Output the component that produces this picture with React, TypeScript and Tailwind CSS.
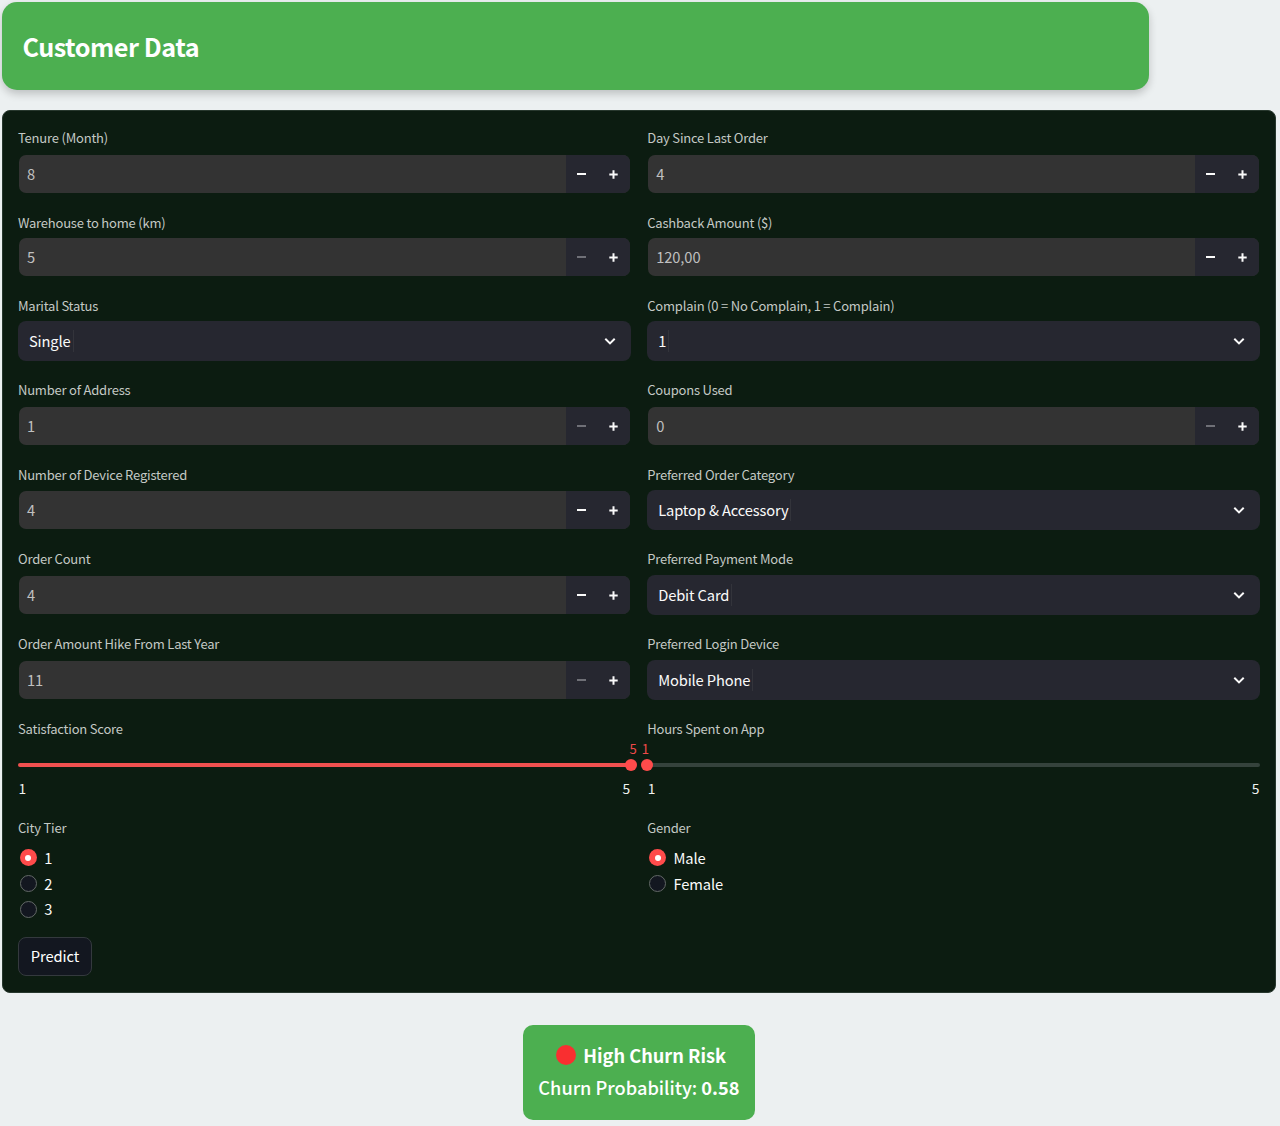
import React from "react";

type NumberProps = { label: string; value: string; minDisabled?: boolean };
type SelectProps = { label: string; value: string };

function Label({ children }: { children: React.ReactNode }) {
  return (
    <div className="h-5 whitespace-nowrap text-[13px] leading-5 tracking-[-0.2px] text-[#c4c9c5]">{children}</div>
  );
}

function Chevron() {
  return (
    <svg width="12" height="8" viewBox="0 0 12 8" fill="none" stroke="#fafafa" strokeWidth="2">
      <path d="M1.3 1.8 6 6.4l4.7-4.6" />
    </svg>
  );
}

function NumberField({ label, value, minDisabled }: NumberProps) {
  return (
    <div className="flex flex-col justify-between">
      <Label>{label}</Label>
      <div className="mx-px my-px flex h-[38px] overflow-hidden rounded-[7px] bg-[#333333]">
        <div className="flex-1 pl-2 text-[14.7px] leading-[37px] tracking-[-0.1px] text-[#c0c0c0]">{value}</div>
        <div className="flex w-16 bg-[#262730]">
          <button type="button" className="flex w-8 items-center justify-center">
            <span className={minDisabled ? "h-[2px] w-[9px] bg-[#6f7077]" : "h-[2px] w-[9px] bg-[#fafafa]"} />
          </button>
          <button type="button" className="flex w-8 items-center justify-center">
            <svg width="9" height="9" viewBox="0 0 9 9" stroke="#fafafa" strokeWidth="2">
              <path d="M4.5 0.3v8.4M0.3 4.5h8.4" />
            </svg>
          </button>
        </div>
      </div>
    </div>
  );
}

function SelectField({ label, value }: SelectProps) {
  return (
    <div className="flex flex-col justify-between">
      <Label>{label}</Label>
      <div className="flex h-10 items-center rounded-lg bg-[#262730] pl-[11px] pr-[15px]">
        <span className="text-[14.7px] leading-10 tracking-[-0.14px] text-[#fafafa]">{value}</span>
        <span className="ml-[2px] h-[22px] w-px bg-[#33343b]" />
        <span className="ml-auto">
          <Chevron />
        </span>
      </div>
    </div>
  );
}

function Slider({ label, full }: { label: string; full?: boolean }) {
  return (
    <div>
      <Label>{label}</Label>
      <div className="relative mt-[24px] h-[5px]">
        <div className={full ? "h-1 rounded-full bg-[#f0504f]" : "h-1 rounded-full bg-[#35423c]"} />
        <div
          className={
            full
              ? "absolute -right-[6px] -top-[4px] size-3 rounded-full bg-[#ff4b4b]"
              : "absolute -left-[6px] -top-[4px] size-3 rounded-full bg-[#ff4b4b]"
          }
        />
        <div
          className={
            full
              ? "absolute -right-[6px] -top-[25px] text-[13.1px] leading-[21px] text-[#f04a4a]"
              : "absolute -left-[5.5px] -top-[25px] text-[13.1px] leading-[21px] text-[#f04a4a]"
          }
        >
          {full ? "5" : "1"}
        </div>
      </div>
      <div className="mt-[10px] flex justify-between px-[0.5px] text-[13.8px] leading-5 text-[#f0f3f0]">
        <span>1</span>
        <span>5</span>
      </div>
    </div>
  );
}

function Radios({ label, options }: { label: string; options: string[] }) {
  return (
    <div>
      <Label>{label}</Label>
      <div className="mt-[7px]">
        {options.map((o, i) => (
          <div key={o} className="flex h-[25.7px] items-center pl-[2px]">
            {i === 0 ? (
              <span className="flex size-[17px] items-center justify-center rounded-full bg-[#ff4b4b]">
                <span className="size-[6px] rounded-full bg-white" />
              </span>
            ) : (
              <span className="size-[17px] rounded-full border border-[#626866] bg-[#131720]" />
            )}
            <span className="mb-px ml-[7.3px] text-[14.7px] leading-[23px] tracking-[-0.1px] text-[#fafafa]">{o}</span>
          </div>
        ))}
      </div>
    </div>
  );
}

export default function App() {
  return (
    <div className="h-[1126px] w-[1280px] overflow-hidden bg-[#ecf0f1] pl-[2.4px] pt-[1.5px] font-['Noto_Sans_CJK_SC',sans-serif]">
      <header className="flex h-[88.5px] w-[1146.5px] items-center rounded-[15px] bg-[#4caf50] pl-5 shadow-[0_4px_8px_rgba(0,0,0,0.2)]">
        <h1 className="text-[25.2px] font-semibold leading-8 tracking-[-0.48px] text-white">Customer Data</h1>
      </header>

      <form className="mt-5 h-[882.5px] w-[1273.2px] rounded-lg border border-[#28382e] bg-[#0c1c11] pl-[14.6px] pr-[14.7px] pt-[17px]">
        <div className="grid grid-cols-2 grid-rows-[66px_64px_65px_66px_65px_66px_66px_80px_104px] gap-x-[16.5px] gap-y-[19px]">
          <NumberField label="Tenure (Month)" value="8" />
          <NumberField label="Day Since Last Order" value="4" />
          <NumberField label="Warehouse to home (km)" value="5" minDisabled />
          <NumberField label="Cashback Amount ($)" value="120,00" />
          <SelectField label="Marital Status" value="Single" />
          <SelectField label="Complain (0 = No Complain, 1 = Complain)" value="1" />
          <NumberField label="Number of Address" value="1" minDisabled />
          <NumberField label="Coupons Used" value="0" minDisabled />
          <NumberField label="Number of Device Registered" value="4" />
          <SelectField label="Preferred Order Category" value="Laptop & Accessory" />
          <NumberField label="Order Count" value="4" />
          <SelectField label="Preferred Payment Mode" value="Debit Card" />
          <NumberField label="Order Amount Hike From Last Year" value="11" minDisabled />
          <SelectField label="Preferred Login Device" value="Mobile Phone" />
          <Slider label="Satisfaction Score" full />
          <Slider label="Hours Spent on App" />
          <Radios label="City Tier" options={["1", "2", "3"]} />
          <Radios label="Gender" options={["Male", "Female"]} />
        </div>
        <button
          type="button"
          className="mt-[15px] flex h-[39px] w-[74px] items-center justify-center rounded-lg border border-[#34393e] bg-[#131720] text-[14.7px] tracking-[-0.1px] text-white"
        >
          Predict
        </button>
      </form>

      <div className="ml-[520.5px] mt-8 flex h-[95px] w-[232px] flex-col items-center rounded-[10px] bg-[#4caf50] pt-[14px] text-white">
        <div className="flex items-center whitespace-nowrap pl-[4px] text-[18.2px] font-bold leading-8">
          <span className="mr-[7.5px] mt-px size-5 rounded-full bg-[#f92f30]" />
          High Churn Risk
        </div>
        <div className="whitespace-nowrap text-[18.2px] font-medium leading-8">
          Churn Probability: <span className="font-bold">0.58</span>
        </div>
      </div>
    </div>
  );
}
